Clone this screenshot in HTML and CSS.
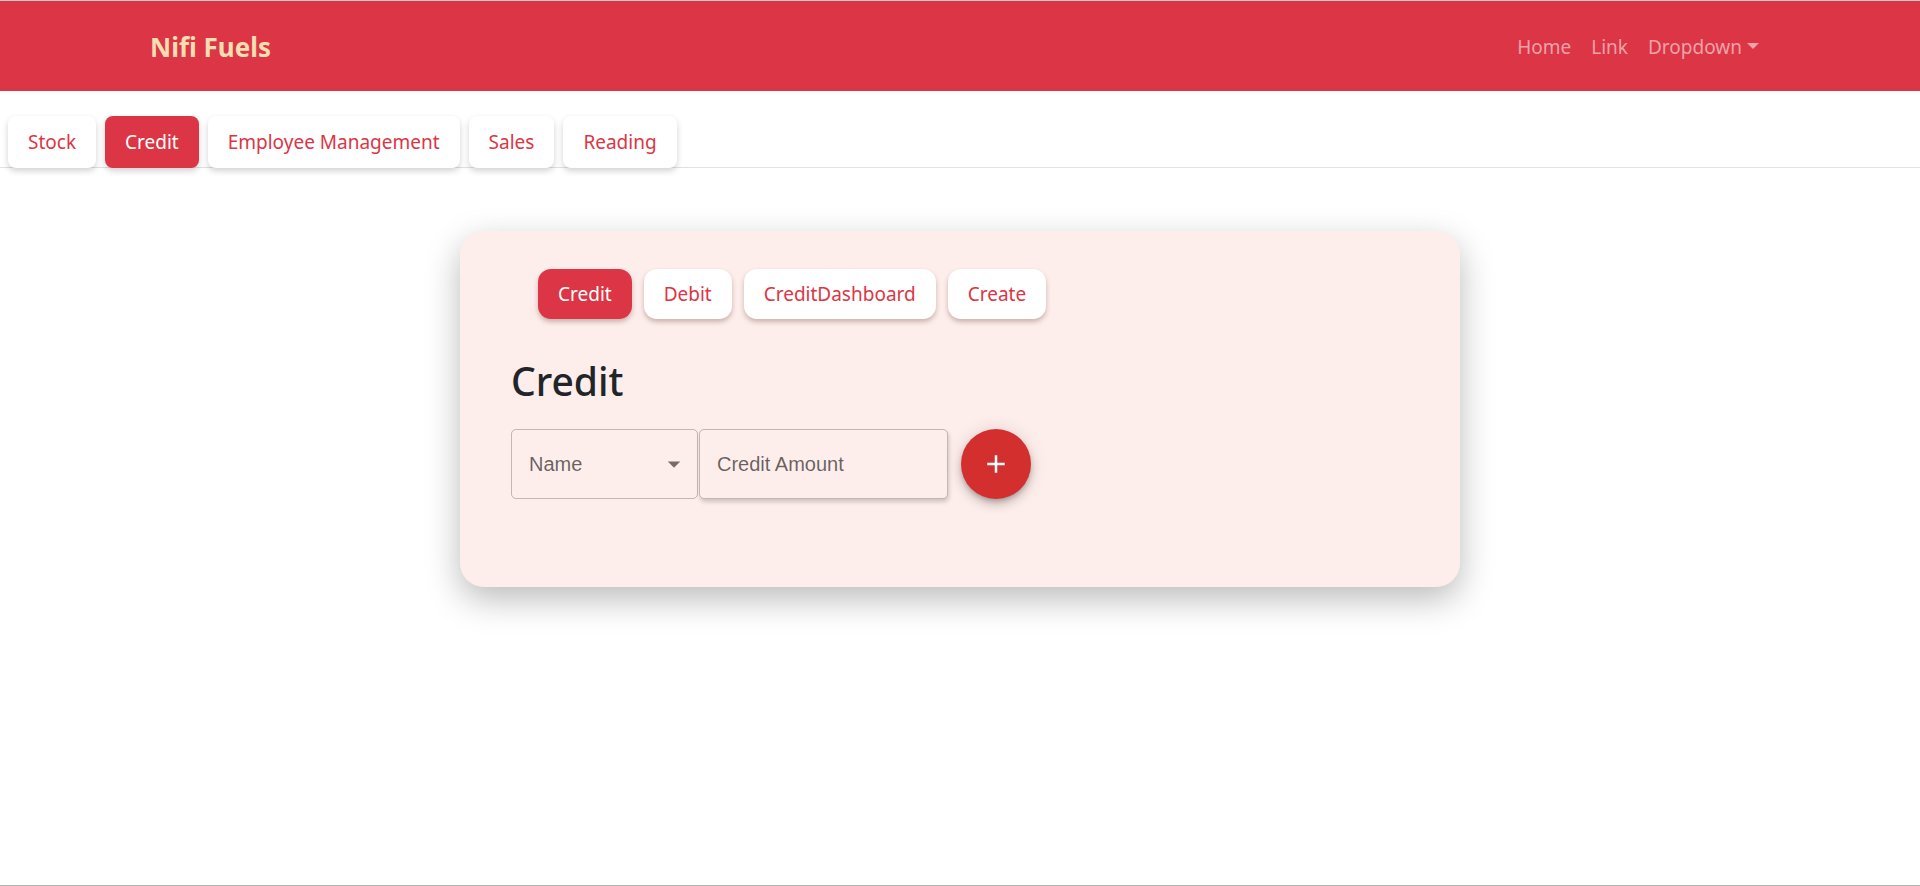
FILE: index.html
```html
<!DOCTYPE html>
<html lang="en">
<head>
<meta charset="utf-8">
<title>Nifi Fuels</title>
<link rel="stylesheet" href="styles.css">
</head>
<body>
<div class="page">
  <nav class="navbar">
    <a class="brand" href="#">Nifi Fuels</a>
    <ul class="nav-links">
      <li><a href="#">Home</a></li>
      <li><a href="#">Link</a></li>
      <li><a href="#" class="dropdown">Dropdown</a></li>
    </ul>
  </nav>

  <ul class="tabs">
    <li><a href="#" class="tab">Stock</a></li>
    <li><a href="#" class="tab active">Credit</a></li>
    <li><a href="#" class="tab">Employee Management</a></li>
    <li><a href="#" class="tab">Sales</a></li>
    <li><a href="#" class="tab">Reading</a></li>
  </ul>

  <main class="main">
    <section class="card">
      <ul class="pills">
        <li><a href="#" class="pill active">Credit</a></li>
        <li><a href="#" class="pill">Debit</a></li>
        <li><a href="#" class="pill">CreditDashboard</a></li>
        <li><a href="#" class="pill">Create</a></li>
      </ul>
      <h2 class="title">Credit</h2>
      <form class="form-row">
        <div class="field select-field">
          <span class="field-label">Name</span>
          <svg class="arrow" viewBox="0 0 24 24" width="30" height="30"><path d="M7 10l5 5 5-5z"/></svg>
        </div>
        <div class="field input-field">
          <span class="field-label">Credit Amount</span>
        </div>
        <button type="button" class="fab" aria-label="add">
          <svg viewBox="0 0 24 24" width="30" height="30"><path d="M19 13h-6v6h-2v-6H5v-2h6V5h2v6h6v2z"/></svg>
        </button>
      </form>
    </section>
  </main>
</div>
</body>
</html>
```

FILE: styles.css
```css
html, body {
  margin: 0;
  padding: 0;
  background: #ffffff;
}

body {
  font-family: "Noto Sans", "Open Sans", sans-serif;
  font-size: 19px;
  color: #212529;
}

a {
  text-decoration: none;
}

ul {
  list-style: none;
  margin: 0;
  padding: 0;
}

.page {
  min-height: 100vh;
  box-sizing: border-box;
  border-top: 1px solid #c9c9c9;
  border-bottom: 1px solid #aeb3a4;
  display: flex;
  flex-direction: column;
}

/* Navbar */
.navbar {
  height: 90px;
  background: #dc3545;
  display: flex;
  align-items: center;
  justify-content: space-between;
  padding: 2px 151px 0 150px;
  box-sizing: border-box;
}

.brand {
  color: #f5deb3;
  font-weight: 700;
  font-size: 26px;
  line-height: 1;
}

.nav-links {
  display: flex;
  align-items: center;
}

.nav-links a {
  display: block;
  padding: 10px 10px;
  color: rgba(255, 255, 255, 0.55);
  font-size: 19px;
  line-height: 1.5;
}

.dropdown::after {
  content: "";
  display: inline-block;
  margin-left: 5px;
  vertical-align: 5px;
  border-top: 6px solid;
  border-left: 6px solid transparent;
  border-right: 6px solid transparent;
}

/* Tabs */
.tabs {
  display: flex;
  gap: 9px;
  margin-top: 25px;
  padding: 0 8px;
  border-bottom: 1px solid #dee2e6;
}

.tab {
  display: flex;
  align-items: center;
  height: 52px;
  padding: 0 20px;
  margin-bottom: -1px;
  border-radius: 8px;
  background: #ffffff;
  color: #dc3545;
  box-shadow: 0 3px 6px rgba(0, 0, 0, 0.18);
  box-sizing: border-box;
}

.tab.active {
  background: #dc3545;
  color: #ffffff;
}

/* Main card */
.main {
  display: flex;
  justify-content: center;
  padding-top: 63px;
}

.card {
  width: 1000px;
  height: 356px;
  box-sizing: border-box;
  padding: 38px 50px 0 51px;
  background: #fdeeeb;
  border-radius: 24px;
  box-shadow: 0 12px 34px rgba(0, 0, 0, 0.27);
}

.pills {
  display: flex;
  gap: 12px;
  margin-left: 27px;
}

.pill {
  display: flex;
  align-items: center;
  height: 50px;
  padding: 0 20px;
  border-radius: 13px;
  background: #ffffff;
  color: #dc3545;
  box-shadow: 0 3px 5px rgba(90, 40, 30, 0.3);
  box-sizing: border-box;
}

.pill.active {
  background: #dc3545;
  color: #ffffff;
}

.title {
  margin: 38px 0 0;
  font-size: 39px;
  line-height: 48px;
  font-weight: 500;
  color: #212529;
}

.form-row {
  display: flex;
  align-items: center;
  margin-top: 24px;
}

.field {
  height: 70px;
  box-sizing: border-box;
  border: 1px solid rgba(0, 0, 0, 0.23);
  border-radius: 5px;
  display: flex;
  align-items: center;
  padding-left: 17px;
  font-family: "Liberation Sans", Arial, sans-serif;
  font-size: 20px;
  color: rgba(0, 0, 0, 0.6);
}

.select-field {
  width: 187px;
  justify-content: space-between;
  padding-right: 8px;
}

.arrow {
  fill: rgba(0, 0, 0, 0.54);
}

.input-field {
  width: 249px;
  margin-left: 1px;
  box-shadow: 1px 3px 4px rgba(0, 0, 0, 0.18);
}

.fab {
  width: 70px;
  height: 70px;
  margin-left: 13px;
  border: none;
  border-radius: 50%;
  background: #d32f2f;
  display: flex;
  align-items: center;
  justify-content: center;
  padding: 0;
  box-shadow: 0 3px 5px -1px rgba(0, 0, 0, 0.2), 0 6px 10px 0 rgba(0, 0, 0, 0.14), 0 1px 18px 0 rgba(0, 0, 0, 0.12);
}

.fab svg {
  fill: #ffffff;
}
```
